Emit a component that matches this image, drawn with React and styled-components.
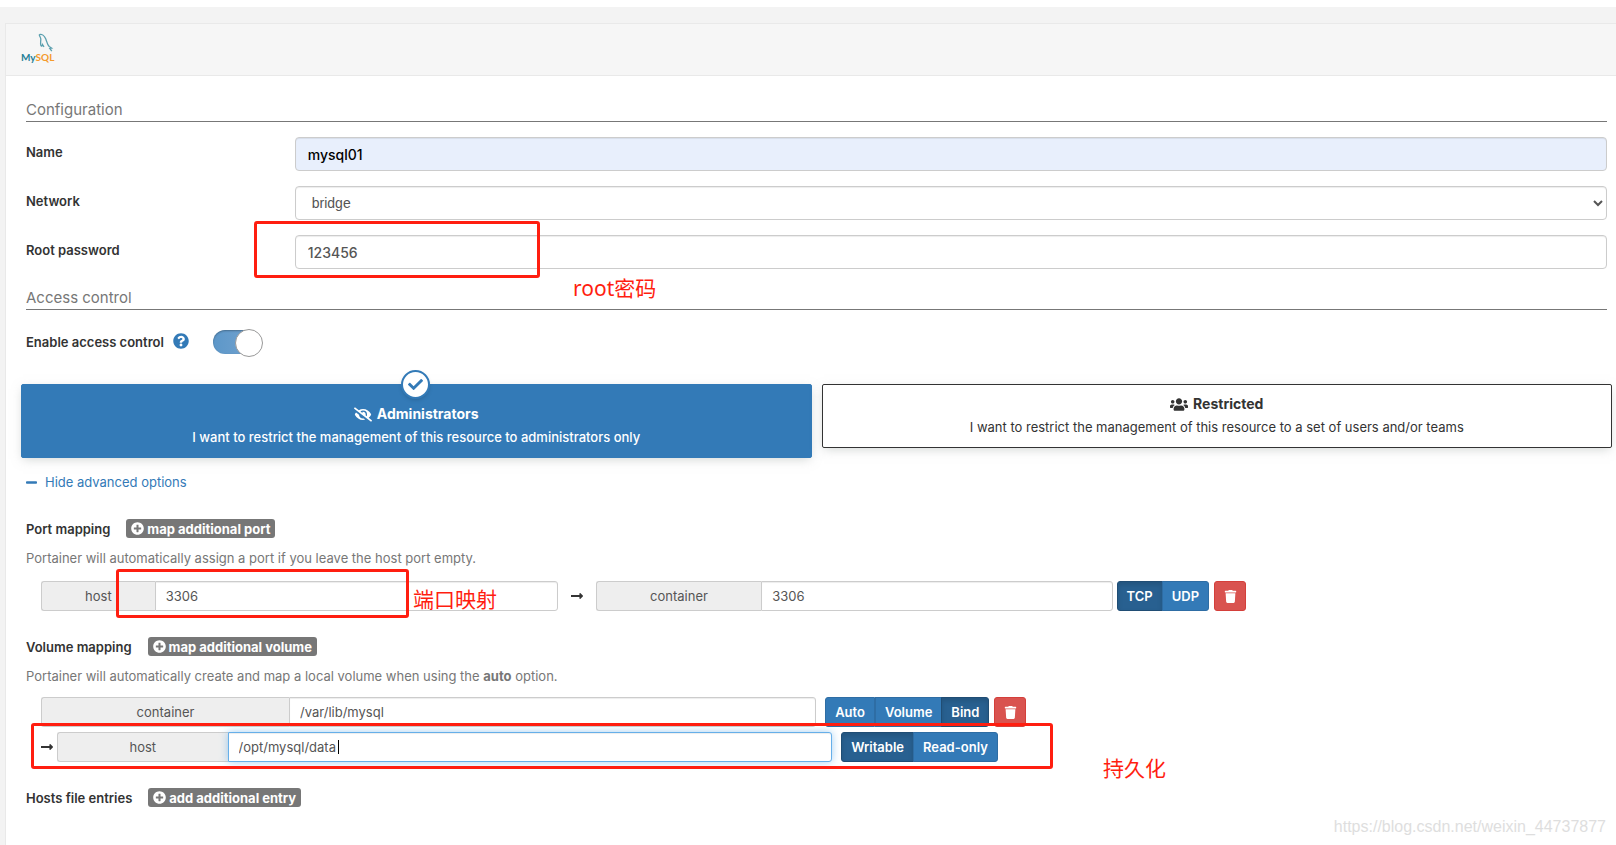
import styled, { createGlobalStyle, css } from 'styled-components'
import { FaCheck, FaEyeSlash, FaMinus, FaPlusCircle, FaQuestionCircle, FaTrash, FaUsers, FaLongArrowAltRight } from 'react-icons/fa'

const GlobalStyle = createGlobalStyle`
    * {
        box-sizing: border-box;
    }

    body {
        margin: 0;
        background: #fff;
        color: #333;
        font-family: Inter, 'Noto Sans CJK SC', sans-serif;
        font-size: 13px;
        line-height: 18px;
        overflow-x: hidden;
    }

    input, select, button {
        font-family: inherit;
        margin: 0;
    }
`

const Page = styled.div`
    position: relative;
    margin-top: 7px;
    padding: 16px 0 0 5px;
    background: #f3f3f3;
    overflow: hidden;
`

const Widget = styled.main`
    min-height: calc(100vh - 23px);
    background: #fff;
    border: 1px solid #e9e9e9;
    border-width: 1px 0 0 1px;
`

const WidgetHeader = styled.header`
    height: 52px;
    padding: 9px 15px;
    background: #f6f6f6;
    border-bottom: 1px solid #e9e9e9;
`

const Form = styled.form`
    padding: 24px 9px 0 20px;
`

const SectionTitle = styled.h2`
    margin: 0 0 ${props => props.$space || '15px'};
    padding-bottom: 1px;
    border-bottom: 1px solid #777;
    color: #777;
    font-size: 15px;
    font-weight: 400;
    line-height: 20px;
`

const Fields = styled.div`
    display: grid;
    gap: 15px;
    margin-bottom: 19px;
`

const Field = styled.div`
    display: flex;
`

const FieldLabel = styled.label`
    flex: 0 0 17%;
    padding-top: 6px;
    font-weight: 600;
`

const control = css`
    flex: 1;
    min-width: 0;
    height: 34px;
    padding: 6px 12px;
    border: 1px solid #ccc;
    border-radius: 4px;
    box-shadow: inset 0 1px 1px rgba(0, 0, 0, 0.075);
    color: #555;
    font-size: 14px;
    outline: none;
`

const TextInput = styled.input`
    ${control}
    background: ${props => props.$autofilled ? '#e8effc' : '#fff'};
    color: ${props => props.$autofilled ? '#000' : '#555'};
    font-weight: 500;
`

const Select = styled.select`
    ${control}
    background: #fff;
    font-family: 'Liberation Sans', sans-serif;
`

const SwitchRow = styled.div`
    display: flex;
    align-items: center;
    height: 26px;
    margin-bottom: 29px;
    font-weight: 600;
`

const HelpIcon = styled(FaQuestionCircle)`
    margin: 0 24px 3px 9px;
    color: #337ab7;
    font-size: 16px;
`

const Switch = styled.input`
    appearance: none;
    width: 48px;
    height: 24px;
    border-radius: 12px;
    background: linear-gradient(90deg, #5c97c9, #76a4cf);
    box-shadow: inset 0 1px 2px rgba(0, 0, 0, 0.3);

    &::after {
        content: '';
        display: block;
        width: 26px;
        height: 26px;
        margin: -1px 0 0 22px;
        border: 1px solid #999;
        border-radius: 50%;
        background: #fff;
    }
`

const BoxSelector = styled.div`
    display: flex;
    align-items: flex-start;
    gap: 10px;
    margin: 0 -5px 15px;
`

const Box = styled.label`
    position: relative;
    flex: 1;
    padding: ${props => props.$selected ? '19px' : '9px'} 9px 11px;
    border: 1px solid ${props => props.$selected ? '#337ab7' : '#333'};
    border-radius: 2px;
    background: ${props => props.$selected ? '#337ab7' : '#fff'};
    color: ${props => props.$selected ? '#fff' : '#333'};
    box-shadow: 0 3px 10px -2px rgba(161, 170, 166, 0.5);
    text-align: center;
    font-weight: ${props => props.$selected ? 500 : 400};

    input {
        position: absolute;
        opacity: 0;
    }
`

const BoxHeader = styled.div`
    display: flex;
    align-items: center;
    justify-content: center;
    gap: 5px;
    margin-bottom: 4px;
    font-size: 14px;
    font-weight: 700;
    line-height: 20px;

    svg {
        width: 18px;
        height: 15px;
    }
`

const CheckBadge = styled.span`
    position: absolute;
    top: -15px;
    left: calc(50% - 15px);
    display: flex;
    align-items: center;
    justify-content: center;
    width: 29px;
    height: 29px;
    border: 2px solid #337ab7;
    border-radius: 50%;
    background: #fff;
    color: #337ab7;
    font-size: 15px;
    box-shadow: 0 2px 5px -2px rgba(0, 0, 0, 0.25);
`

const ToggleLink = styled.a`
    display: flex;
    align-items: center;
    gap: 8px;
    margin-bottom: 28px;
    color: #337ab7;
    text-decoration: none;

    svg {
        width: 11px;
    }
`

const GroupHeader = styled.div`
    display: flex;
    align-items: center;
    gap: 16px;
    height: 19px;
    margin-top: 26px;
    font-weight: 600;
`

const AddButton = styled.button`
    display: flex;
    align-items: center;
    gap: 3px;
    height: 19px;
    padding: 0 5px;
    border: 0;
    border-radius: 3px;
    background: #777;
    color: #fff;
    font-size: 13px;
    font-weight: 700;
`

const Hint = styled.p`
    margin: 11px 0 ${props => props.$tight ? '11px' : '13px'};
    padding-bottom: 1px;
    color: #777;
`

const MappingRow = styled.div`
    display: flex;
    align-items: center;
    height: 30px;
    margin: 0 0 5px 15px;
`

const InputGroup = styled.div`
    position: relative;
    display: flex;
    flex: 0 0 ${props => props.$width};
`

const Addon = styled.label`
    flex: 0 0 ${props => props.$width};
    height: 30px;
    padding: 5px 10px;
    border: 1px solid #ccc;
    border-right: 0;
    border-radius: 3px 0 0 3px;
    background: #eee;
    color: #555;
    text-align: center;
`

const GroupInput = styled.input`
    flex: 1;
    min-width: 0;
    height: 30px;
    padding: 5px 10px;
    border: 1px solid ${props => props.$focused ? '#66afe9' : '#ccc'};
    border-radius: 0 3px 3px 0;
    background: #fff;
    box-shadow: ${props => props.$focused
        ? 'inset 0 1px 1px rgba(0, 0, 0, 0.075), 0 0 8px rgba(102, 175, 233, 0.6)'
        : 'inset 0 1px 1px rgba(0, 0, 0, 0.075)'};
    color: #555;
    font-size: 13px;
    outline: none;
`

const Caret = styled.span`
    position: absolute;
    top: 8px;
    left: calc(22% + 110px);
    width: 1px;
    height: 14px;
    background: #000;
`

const Arrow = styled(FaLongArrowAltRight)`
    flex: none;
    width: 12px;
    height: 14px;
    margin: 0 ${props => props.$gap};
`

const ButtonGroup = styled.div`
    display: flex;
    margin-left: ${props => props.$gap};

    button:first-child {
        border-radius: 3px 0 0 3px;
    }

    button:last-child {
        margin-left: -1px;
        border-radius: 0 3px 3px 0;
    }
`

const Button = styled.button`
    height: 30px;
    padding: 0 9px;
    border: 1px solid ${props => props.$active ? '#204d74' : '#2e6da4'};
    background: ${props => props.$active ? '#286090' : '#337ab7'};
    box-shadow: ${props => props.$active ? 'inset 0 3px 5px rgba(0, 0, 0, 0.125)' : 'none'};
    color: #fff;
    font-size: 13px;
    font-weight: 600;
`

const DeleteButton = styled.button`
    display: flex;
    align-items: center;
    justify-content: center;
    width: 32px;
    height: 30px;
    margin-left: 5px;
    padding: 0;
    border: 1px solid #d43f3a;
    border-radius: 3px;
    background: #d9534f;
    color: #fff;
    font-size: 13px;
`

const Highlight = styled.div`
    position: absolute;
    top: ${props => props.$top}px;
    left: ${props => props.$left}px;
    width: ${props => props.$width}px;
    height: ${props => props.$height}px;
    border: 3px solid #ff1e10;
    border-radius: 3px;
    pointer-events: none;
`

const Note = styled.span`
    position: absolute;
    top: ${props => props.$top}px;
    left: ${props => props.$left}px;
    color: #ff1e10;
    font-family: 'Noto Sans', 'Noto Sans CJK SC', sans-serif;
    font-size: 21px;
    line-height: 28px;
`

const Watermark = styled.span`
    position: absolute;
    right: 10px;
    bottom: 8px;
    color: #dedede;
    font-family: 'Liberation Sans', sans-serif;
    font-size: 16px;
    line-height: 20px;
`

const Logo = styled.svg`
    display: block;
    overflow: visible;
    font-family: Lato, sans-serif;
    font-size: 10px;
    font-weight: 700;
`

function MysqlLogo() {
    return (
        <Logo width="35" height="35" viewBox="0 0 35 35" role="img" aria-label="MySQL">
            <path
                d="M18.300 1.500c2.400-.8 5.200 1.200 6.500 4.400 1 2.600 1.200 5.400 3.400 7.600l2.400 1.600-1.800.3 2 2.700M18.300 1.500c0 1.700 1.400 2.700 1.500 4.500.1 2-.7 4.400.1 6.600.5 1.200 1.500.2 1.600-1l1.500 2.300"
                fill="none"
                stroke="#5a9fae"
                strokeWidth="1.300"
            />
            <text x="0" y="28">
                <tspan fill="#1f7f96">My</tspan>
                <tspan fill="#f49a2c">SQL</tspan>
            </text>
        </Logo>
    )
}

function ButtonSet({ gap, options, active }) {
    return (
        <ButtonGroup $gap={gap}>
            {options.map(option => (
                <Button key={option} type="button" $active={option === active}>{option}</Button>
            ))}
        </ButtonGroup>
    )
}

function MappingHeader({ title, action }) {
    return (
        <GroupHeader>
            <span>{title}</span>
            <AddButton type="button"><FaPlusCircle /> {action}</AddButton>
        </GroupHeader>
    )
}

export default function App() {
    return (
        <>
            <GlobalStyle />
            <Page>
                <Widget>
                    <WidgetHeader>
                        <MysqlLogo />
                    </WidgetHeader>
                    <Form>
                        <SectionTitle>Configuration</SectionTitle>
                        <Fields>
                            <Field>
                                <FieldLabel htmlFor="name">Name</FieldLabel>
                                <TextInput id="name" defaultValue="mysql01" $autofilled />
                            </Field>
                            <Field>
                                <FieldLabel htmlFor="network">Network</FieldLabel>
                                <Select id="network" defaultValue="bridge">
                                    <option value="bridge">bridge</option>
                                </Select>
                            </Field>
                            <Field>
                                <FieldLabel htmlFor="password">Root password</FieldLabel>
                                <TextInput id="password" defaultValue="123456" />
                            </Field>
                        </Fields>

                        <SectionTitle $space="19px">Access control</SectionTitle>
                        <SwitchRow>
                            <label htmlFor="access">Enable access control</label>
                            <HelpIcon />
                            <Switch id="access" type="checkbox" defaultChecked />
                        </SwitchRow>
                        <BoxSelector>
                            <Box $selected>
                                <input type="radio" name="ownership" defaultChecked />
                                <CheckBadge><FaCheck /></CheckBadge>
                                <BoxHeader><FaEyeSlash /> Administrators</BoxHeader>
                                I want to restrict the management of this resource to administrators only
                            </Box>
                            <Box>
                                <input type="radio" name="ownership" />
                                <BoxHeader><FaUsers /> Restricted</BoxHeader>
                                I want to restrict the management of this resource to a set of users and/or teams
                            </Box>
                        </BoxSelector>
                        <ToggleLink href="#"><FaMinus /> Hide advanced options</ToggleLink>

                        <MappingHeader title="Port mapping" action="map additional port" />
                        <Hint>Portainer will automatically assign a port if you leave the host port empty.</Hint>
                        <MappingRow>
                            <InputGroup $width="33%">
                                <Addon htmlFor="host-port" $width="22%">host</Addon>
                                <GroupInput id="host-port" defaultValue="3306" />
                            </InputGroup>
                            <Arrow $gap="13px" />
                            <InputGroup $width="33%">
                                <Addon htmlFor="container-port" $width="32%">container</Addon>
                                <GroupInput id="container-port" defaultValue="3306" />
                            </InputGroup>
                            <ButtonSet gap="4px" options={['TCP', 'UDP']} active="TCP" />
                            <DeleteButton type="button" aria-label="Remove port"><FaTrash /></DeleteButton>
                        </MappingRow>

                        <MappingHeader title="Volume mapping" action="map additional volume" />
                        <Hint $tight>Portainer will automatically create and map a local volume when using the <b>auto</b> option.</Hint>
                        <MappingRow>
                            <InputGroup $width="49.5%">
                                <Addon htmlFor="volume-container" $width="32%">container</Addon>
                                <GroupInput id="volume-container" defaultValue="/var/lib/mysql" />
                            </InputGroup>
                            <ButtonSet gap="9px" options={['Auto', 'Volume', 'Bind']} active="Bind" />
                            <DeleteButton type="button" aria-label="Remove volume"><FaTrash /></DeleteButton>
                        </MappingRow>
                        <MappingRow>
                            <Arrow $gap="4px 0 0" />
                            <InputGroup $width="49.5%">
                                <Addon htmlFor="volume-host" $width="22%">host</Addon>
                                <GroupInput id="volume-host" defaultValue="/opt/mysql/data" $focused />
                                <Caret />
                            </InputGroup>
                            <ButtonSet gap="9px" options={['Writable', 'Read-only']} active="Writable" />
                        </MappingRow>

                        <MappingHeader title="Hosts file entries" action="add additional entry" />
                    </Form>
                </Widget>

                <Highlight $top={214} $left={254} $width={286} $height={57} />
                <Note $top={267} $left={573}>root密码</Note>
                <Highlight $top={562} $left={116} $width={293} $height={49} />
                <Note $top={578} $left={413}>端口映射</Note>
                <Highlight $top={716} $left={31} $width={1022} $height={46} />
                <Note $top={747} $left={1103}>持久化</Note>
                <Watermark>https://blog.csdn.net/weixin_44737877</Watermark>
            </Page>
        </>
    )
}
